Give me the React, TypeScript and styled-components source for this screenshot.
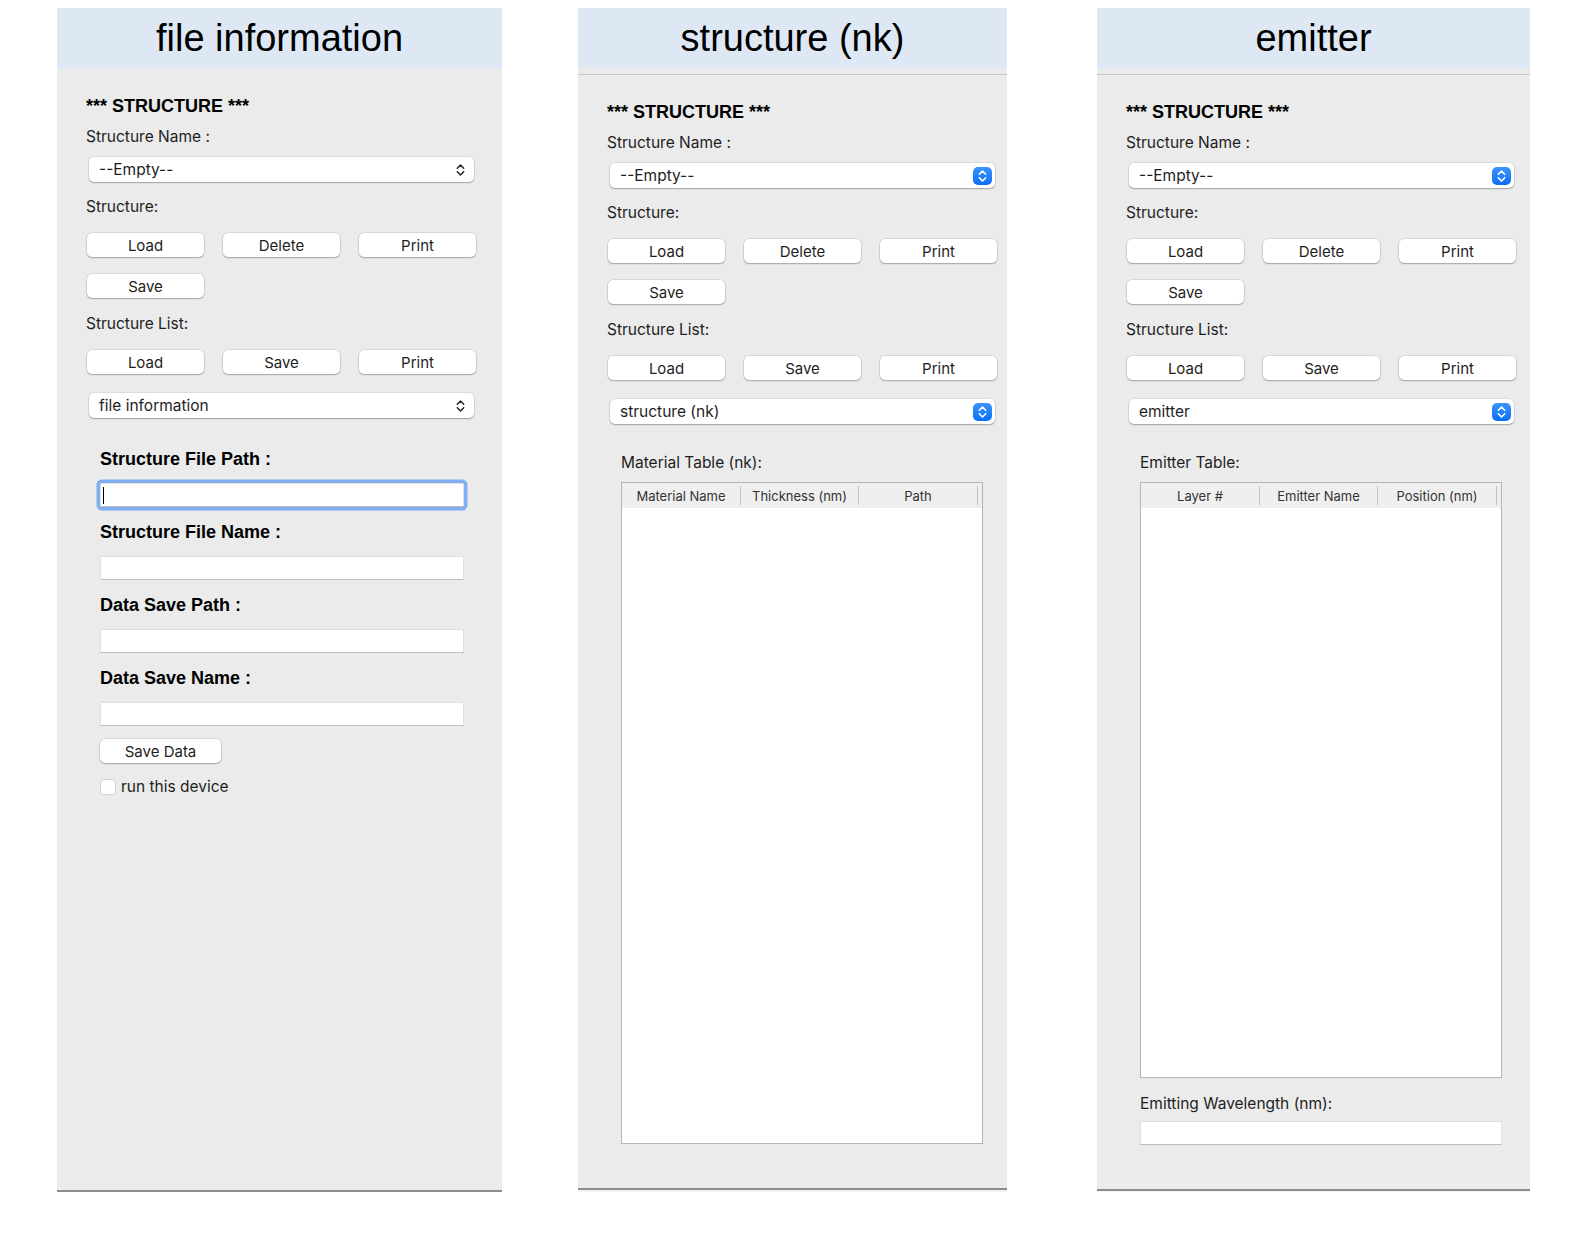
import React, { FC } from 'react';
import styled, { createGlobalStyle } from 'styled-components';

const GlobalStyle = createGlobalStyle`
  html, body {
    margin: 0;
    padding: 0;
    background: #fff;
  }
  body {
    font-family: Inter, 'Noto Sans', sans-serif;
    color: #1e1e1e;
  }
`;

const Page = styled.div`
  display: flex;
  align-items: flex-start;
  padding: 8px 0 0 57px;
`;

const Panel = styled.section<{ $width: number; $height: number; $offset?: number }>`
  width: ${p => p.$width}px;
  height: ${p => p.$height}px;
  margin-left: ${p => p.$offset ?? 0}px;
  box-sizing: border-box;
  display: flex;
  flex-direction: column;
  background: #ebebeb;
  border-bottom: 2px solid #8c8c8c;
  box-shadow: 0 5px 0 #f3f3f3;
`;

const Title = styled.header`
  height: 60px;
  flex-shrink: 0;
  background: #dde8f4;
  font: 38px/60px 'Liberation Sans', Arial, sans-serif;
  color: #000;
  text-align: center;
`;

const TitleRule = styled.div`
  flex-shrink: 0;
  height: 1px;
  margin-top: 6px;
  background: #c6c6c6;
`;

const Body = styled.div<{ $top: number }>`
  flex: 1;
  min-height: 0;
  display: flex;
  flex-direction: column;
  padding: ${p => p.$top}px 0 44px 29px;
`;

const Heading = styled.h2`
  margin: 0;
  font: bold 18px/22px 'Liberation Sans', Arial, sans-serif;
  color: #000;
`;

const Label = styled.div<{ $mt: number }>`
  margin-top: ${p => p.$mt}px;
  font-size: 15.5px;
  line-height: 18px;
`;

const SelectBox = styled.div<{ $mt: number }>`
  margin: ${p => p.$mt}px 0 0 3px;
  width: 385px;
  height: 25px;
  box-sizing: border-box;
  display: flex;
  align-items: center;
  justify-content: space-between;
  padding: 0 3px 0 10px;
  background: #fff;
  border-radius: 5px;
  box-shadow: 0 0 0 0.5px rgba(0, 0, 0, 0.12), 0 1px 1.5px rgba(0, 0, 0, 0.28);
  font-size: 15.5px;
`;

const PlainArrows = styled.span`
  display: flex;
  width: 19px;
  height: 18px;
  align-items: center;
  justify-content: center;
  margin-right: 1px;
`;

const BlueArrows = styled.span`
  display: flex;
  width: 19px;
  height: 18px;
  align-items: center;
  justify-content: center;
  border-radius: 5px;
  background: linear-gradient(#3b94fc, #0b6ff4);
`;

const ButtonGrid = styled.div<{ $mt: number }>`
  display: grid;
  grid-template-columns: repeat(3, 117px);
  column-gap: 19px;
  row-gap: 17px;
  margin: ${p => p.$mt}px 0 0 1px;
`;

const Button = styled.button`
  height: 24px;
  padding: 0;
  border: none;
  border-radius: 5px;
  background: #fff;
  box-shadow: 0 0 0 0.5px rgba(0, 0, 0, 0.15), 0 1px 1.5px rgba(0, 0, 0, 0.25);
  font: 15px Inter, 'Noto Sans', sans-serif;
  color: #1e1e1e;
`;

const SaveDataButton = styled(Button)`
  width: 121px;
  margin-top: 13px;
`;

const Inner = styled.div`
  flex: 1;
  min-height: 0;
  display: flex;
  flex-direction: column;
  margin-top: 30px;
  padding-left: 14px;
`;

const FieldTitle = styled.div<{ $mt: number }>`
  margin-top: ${p => p.$mt}px;
  font: bold 18px/22px 'Liberation Sans', Arial, sans-serif;
  color: #000;
`;

const TextField = styled.div<{ $mt: number; $width: number; $focused?: boolean }>`
  margin-top: ${p => p.$mt}px;
  width: ${p => p.$width}px;
  height: 24px;
  box-sizing: border-box;
  display: flex;
  align-items: center;
  padding-left: 2px;
  background: #fff;
  border: 1px solid #e0e0e0;
  border-bottom-color: #bdbdbd;
  border-radius: ${p => (p.$focused ? 2 : 0)}px;
  box-shadow: ${p => (p.$focused ? '0 0 0 3.5px #80aef0' : 'none')};
`;

const Caret = styled.span`
  width: 1px;
  height: 17px;
  background: #000;
`;

const CheckRow = styled.label`
  display: flex;
  align-items: center;
  gap: 5px;
  margin-top: 15px;
  font-size: 15.5px;
  line-height: 18px;
`;

const CheckBox = styled.span`
  width: 16px;
  height: 16px;
  box-sizing: border-box;
  background: #fff;
  border: 1px solid #d2d2d2;
  border-radius: 4px;
`;

const Table = styled.div`
  flex: 1;
  min-height: 0;
  width: 362px;
  box-sizing: border-box;
  margin-top: 10px;
  background: #fff;
  border: 1px solid #b5b5b5;
`;

const TableHead = styled.div`
  display: grid;
  grid-template-columns: 118px 1px 117px 1px 118px 1px 1fr;
  align-items: center;
  height: 25px;
  background: #efefef;
`;

const HeadCell = styled.div`
  text-align: center;
  font-size: 13px;
  color: #333;
`;

const HeadSep = styled.span`
  height: 19px;
  background: #c2c2c2;
`;

const ChevronUpDown: FC<{ color: string }> = ({ color }) => (
  <svg width="9" height="14" viewBox="0 0 9 14">
    <path
      d="M1.3 5.3L4.5 2L7.7 5.3M1.3 8.7L4.5 12L7.7 8.7"
      fill="none"
      stroke={color}
      strokeWidth="1.6"
      strokeLinecap="round"
      strokeLinejoin="round"
    />
  </svg>
);

const Select: FC<{ value: string; mt: number; active?: boolean }> = ({ value, mt, active }) => (
  <SelectBox $mt={mt}>
    <span>{value}</span>
    {active ? (
      <BlueArrows>
        <ChevronUpDown color="#fff" />
      </BlueArrows>
    ) : (
      <PlainArrows>
        <ChevronUpDown color="#2a2a2a" />
      </PlainArrows>
    )}
  </SelectBox>
);

const StructureBlock: FC<{ current: string; active?: boolean }> = ({ current, active }) => (
  <>
    <Heading>*** STRUCTURE ***</Heading>
    <Label $mt={11}>Structure Name :</Label>
    <Select value="--Empty--" mt={11} active={active} />
    <Label $mt={16}>Structure:</Label>
    <ButtonGrid $mt={17}>
      <Button>Load</Button>
      <Button>Delete</Button>
      <Button>Print</Button>
      <Button>Save</Button>
    </ButtonGrid>
    <Label $mt={17}>Structure List:</Label>
    <ButtonGrid $mt={17}>
      <Button>Load</Button>
      <Button>Save</Button>
      <Button>Print</Button>
    </ButtonGrid>
    <Select value={current} mt={19} active={active} />
  </>
);

const DataTable: FC<{ columns: string[] }> = ({ columns }) => (
  <Table>
    <TableHead>
      {columns.map(c => (
        <React.Fragment key={c}>
          <HeadCell>{c}</HeadCell>
          <HeadSep />
        </React.Fragment>
      ))}
    </TableHead>
  </Table>
);

const App: FC = () => (
  <>
    <GlobalStyle />
    <Page>
      <Panel $width={445} $height={1184}>
        <Title>file information</Title>
        <Body $top={27}>
          <StructureBlock current="file information" />
          <Inner>
            <FieldTitle $mt={0}>Structure File Path :</FieldTitle>
            <TextField $mt={13} $width={364} $focused>
              <Caret />
            </TextField>
            <FieldTitle $mt={14}>Structure File Name :</FieldTitle>
            <TextField $mt={13} $width={364} />
            <FieldTitle $mt={14}>Data Save Path :</FieldTitle>
            <TextField $mt={13} $width={364} />
            <FieldTitle $mt={14}>Data Save Name :</FieldTitle>
            <TextField $mt={13} $width={364} />
            <SaveDataButton>Save Data</SaveDataButton>
            <CheckRow>
              <CheckBox />
              run this device
            </CheckRow>
          </Inner>
        </Body>
      </Panel>

      <Panel $width={429} $height={1182} $offset={76}>
        <Title>structure (nk)</Title>
        <TitleRule />
        <Body $top={26}>
          <StructureBlock current="structure (nk)" active />
          <Inner>
            <Label $mt={0}>Material Table (nk):</Label>
            <DataTable columns={['Material Name', 'Thickness (nm)', 'Path']} />
          </Inner>
        </Body>
      </Panel>

      <Panel $width={433} $height={1183} $offset={90}>
        <Title>emitter</Title>
        <TitleRule />
        <Body $top={26}>
          <StructureBlock current="emitter" active />
          <Inner>
            <Label $mt={0}>Emitter Table:</Label>
            <DataTable columns={['Layer #', 'Emitter Name', 'Position (nm)']} />
            <Label $mt={17}>Emitting Wavelength (nm):</Label>
            <TextField $mt={8} $width={362} />
          </Inner>
        </Body>
      </Panel>
    </Page>
  </>
);

export default App;
